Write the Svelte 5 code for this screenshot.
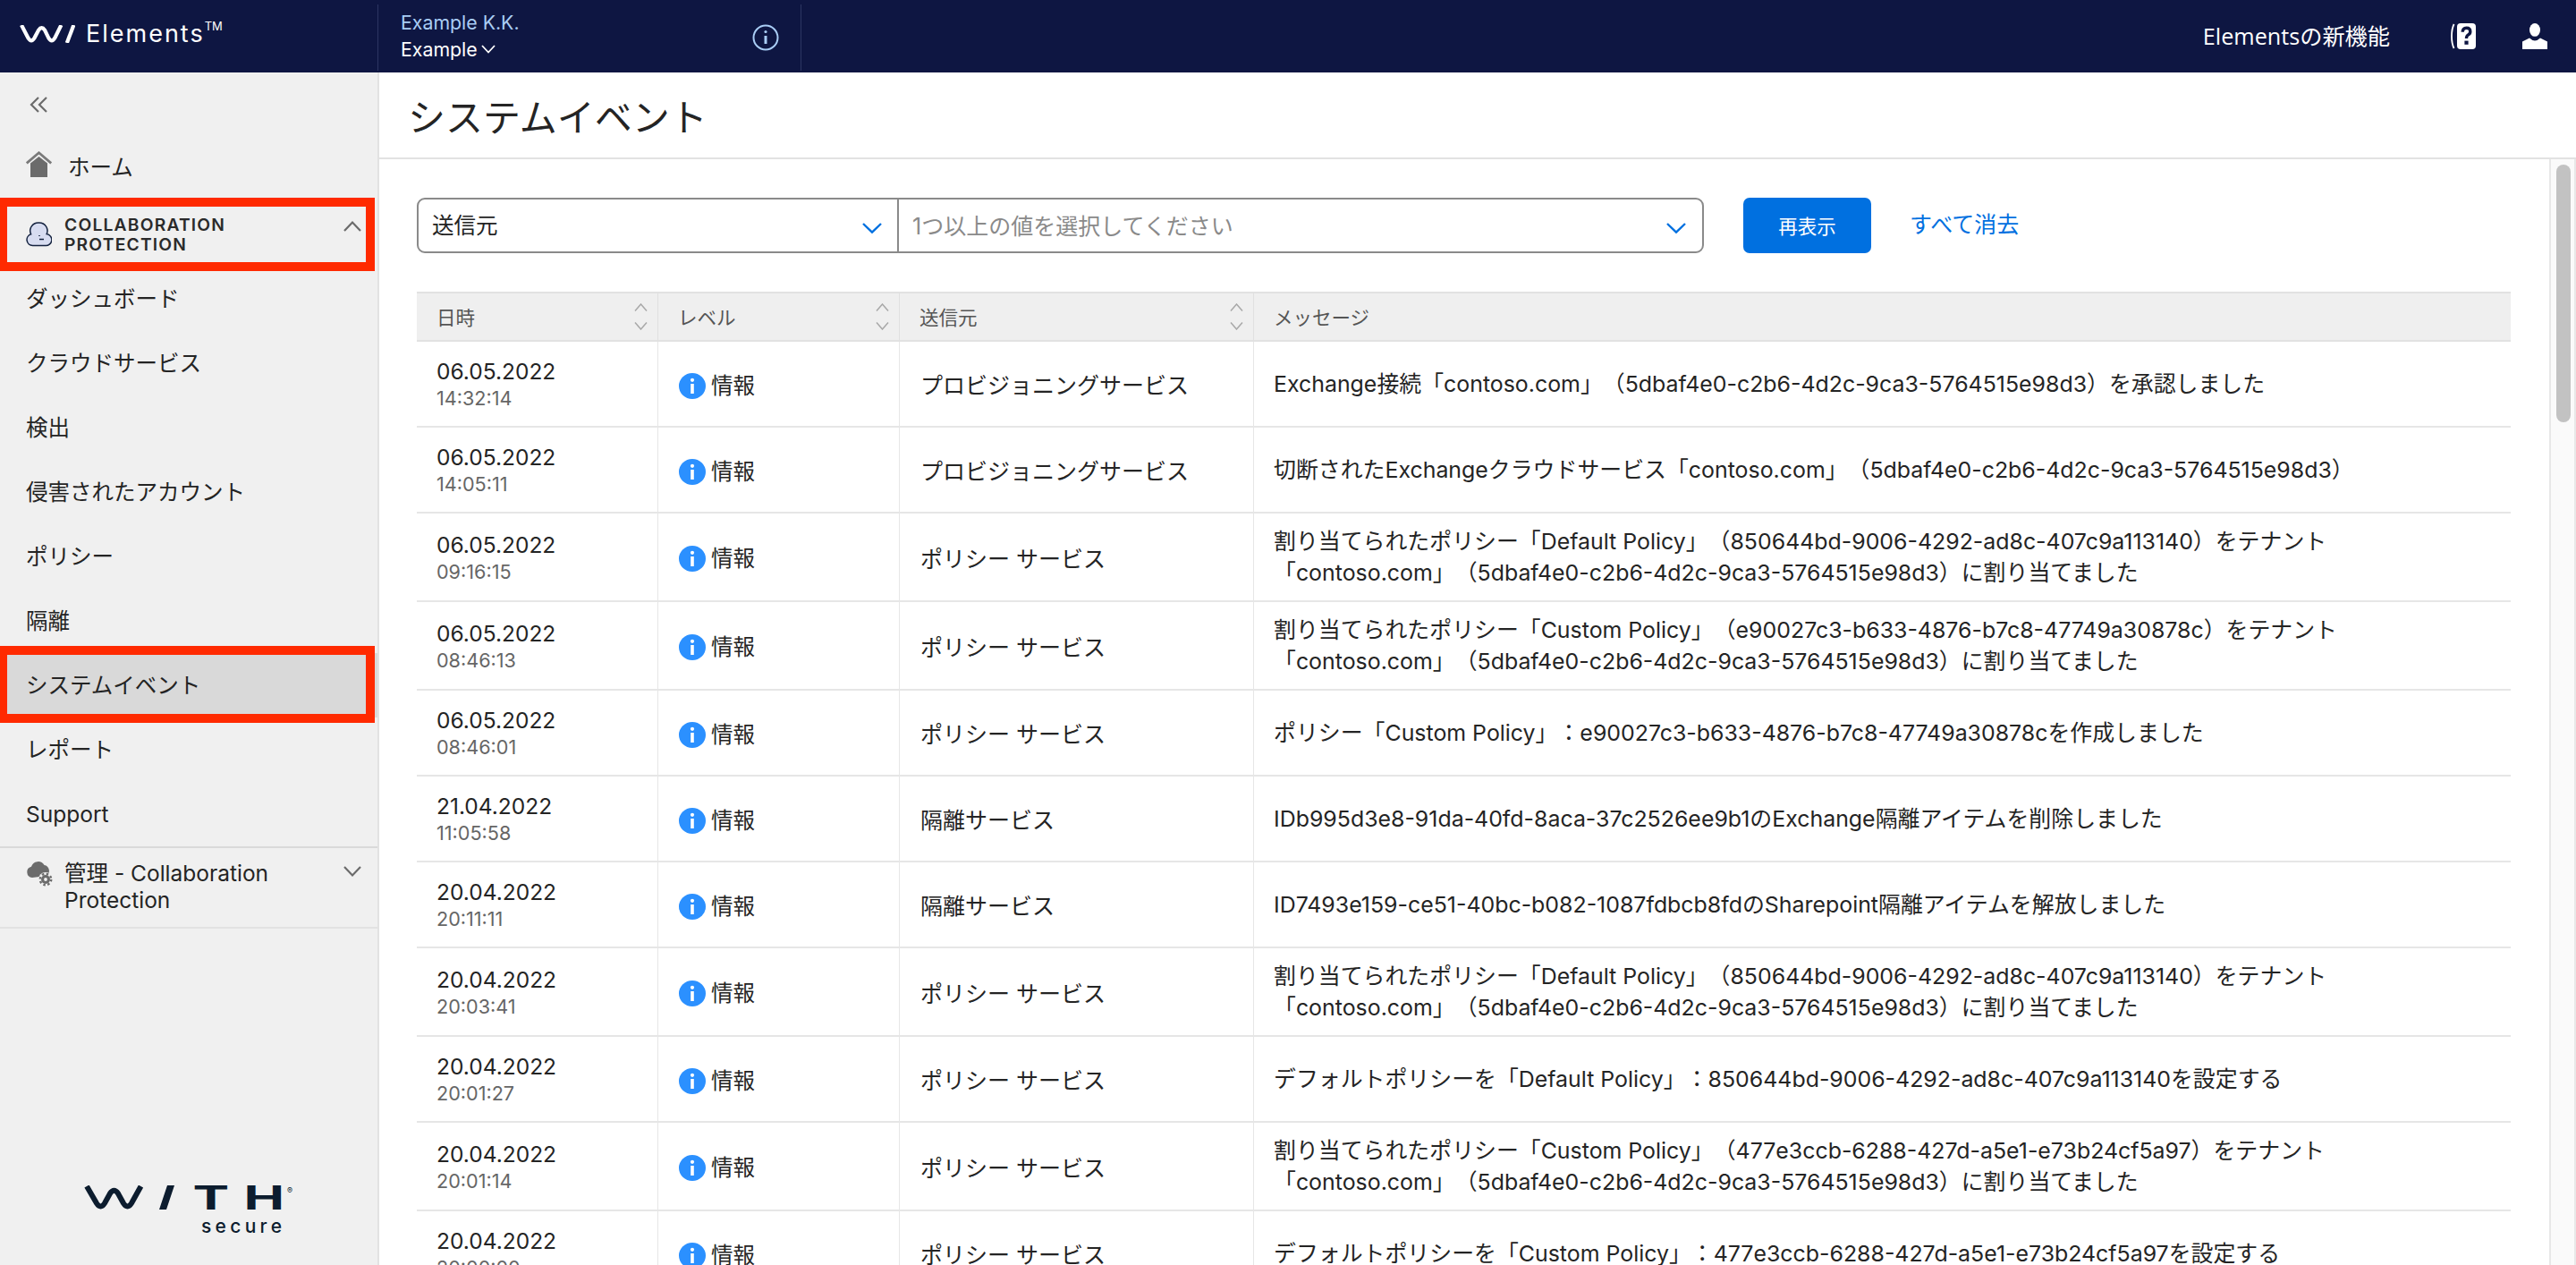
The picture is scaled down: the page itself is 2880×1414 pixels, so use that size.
<script lang="ts">
  type Row = { date: string; time: string; source: string; lines: string[] };

  const tenant = '「contoso.com」（5dbaf4e0-c2b6-4d2c-9ca3-5764515e98d3）に割り当てました';
  const prov = 'プロビジョニングサービス';
  const policy = 'ポリシー サービス';
  const quarantine = '隔離サービス';

  const rows: Row[] = [
    { date: '06.05.2022', time: '14:32:14', source: prov, lines: ['Exchange接続「contoso.com」（5dbaf4e0-c2b6-4d2c-9ca3-5764515e98d3）を承認しました'] },
    { date: '06.05.2022', time: '14:05:11', source: prov, lines: ['切断されたExchangeクラウドサービス「contoso.com」（5dbaf4e0-c2b6-4d2c-9ca3-5764515e98d3）'] },
    { date: '06.05.2022', time: '09:16:15', source: policy, lines: ['割り当てられたポリシー「Default Policy」（850644bd-9006-4292-ad8c-407c9a113140）をテナント', tenant] },
    { date: '06.05.2022', time: '08:46:13', source: policy, lines: ['割り当てられたポリシー「Custom Policy」（e90027c3-b633-4876-b7c8-47749a30878c）をテナント', tenant] },
    { date: '06.05.2022', time: '08:46:01', source: policy, lines: ['ポリシー「Custom Policy」：e90027c3-b633-4876-b7c8-47749a30878cを作成しました'] },
    { date: '21.04.2022', time: '11:05:58', source: quarantine, lines: ['IDb995d3e8-91da-40fd-8aca-37c2526ee9b1のExchange隔離アイテムを削除しました'] },
    { date: '20.04.2022', time: '20:11:11', source: quarantine, lines: ['ID7493e159-ce51-40bc-b082-1087fdbcb8fdのSharepoint隔離アイテムを解放しました'] },
    { date: '20.04.2022', time: '20:03:41', source: policy, lines: ['割り当てられたポリシー「Default Policy」（850644bd-9006-4292-ad8c-407c9a113140）をテナント', tenant] },
    { date: '20.04.2022', time: '20:01:27', source: policy, lines: ['デフォルトポリシーを「Default Policy」：850644bd-9006-4292-ad8c-407c9a113140を設定する'] },
    { date: '20.04.2022', time: '20:01:14', source: policy, lines: ['割り当てられたポリシー「Custom Policy」（477e3ccb-6288-427d-a5e1-e73b24cf5a97）をテナント', tenant] },
    { date: '20.04.2022', time: '20:00:00', source: policy, lines: ['デフォルトポリシーを「Custom Policy」：477e3ccb-6288-427d-a5e1-e73b24cf5a97を設定する'] },
  ];

  const navItems = ['ダッシュボード', 'クラウドサービス', '検出', '侵害されたアカウント', 'ポリシー', '隔離', 'システムイベント', 'レポート', 'Support'];
  const columns = ['日時', 'レベル', '送信元'];
</script>

<div class="app" lang="ja">
  <header class="topbar">
    <div class="brand">
      <svg class="mark" width="62" height="20" viewBox="0 0 62 20" fill="none" stroke="#fff" stroke-width="4.2">
        <path d="M2 0 L9.6 14.6 Q13 20 16.4 14.6 L21.2 5.6 Q24.6 0.6 28 5.6 L32.4 14.6 Q35.8 20 39.2 14.6 L46.4 0" />
        <path d="M60.4 0 L52.8 20" />
      </svg>
      <span class="brand-name">Elements<sup>TM</sup></span>
    </div>
    <div class="tenant">
      <div class="tenant-text">
        <span class="tenant-org">Example K.K.</span>
        <span class="tenant-sel">Example
          <svg width="16" height="10" viewBox="0 0 16 10" fill="none" stroke="#fff" stroke-width="1.8"><path d="M1 1 L8 8.5 L15 1" /></svg>
        </span>
      </div>
      <svg class="info-line" width="30" height="30" viewBox="0 0 30 30" fill="none" stroke="#a9cdf5" stroke-width="2">
        <circle cx="15" cy="15" r="13.5" />
        <path d="M15 13 V22" stroke-width="3" />
        <circle cx="15" cy="8.5" r="1.6" fill="#a9cdf5" stroke="none" />
      </svg>
    </div>
    <div class="top-right">
      <span class="whatsnew">Elementsの新機能</span>
      <svg class="help" width="28" height="29" viewBox="0 0 28 29">
        <path d="M3.6 1 Q1 6 1 14.5 Q1 23 3.6 28" fill="none" stroke="#fff" stroke-width="1.8" />
        <rect x="7" y="0" width="21" height="29" rx="4" fill="#fff" />
        <path d="M13.2 9.8 Q13.2 5.2 17.5 5.2 Q21.8 5.2 21.8 9.2 Q21.8 11.8 19.4 13 Q17.5 14 17.5 17" fill="none" stroke="#0e1642" stroke-width="3.4" />
        <rect x="15.4" y="19.6" width="4.2" height="4.2" fill="#0e1642" />
      </svg>
      <svg class="user" width="28" height="29" viewBox="0 0 28 29" fill="#fff">
        <ellipse cx="14" cy="7.4" rx="6" ry="7.4" />
        <path d="M0 29 V20.5 L8 16.6 Q14 22.5 20 16.6 L28 20.5 V29 Z" />
      </svg>
    </div>
  </header>

  <div class="body">
    <aside class="sidebar">
      <div class="collapse">
        <svg width="20" height="18" viewBox="0 0 20 18" fill="none" stroke="#6b6b6b" stroke-width="2.2"><path d="M10 1 L2 9 L10 17 M19 1 L11 9 L19 17" /></svg>
      </div>
      <div class="home">
        <svg width="29" height="29" viewBox="0 0 29 29" fill="#6b6b6b">
          <path d="M0.8 13.4 L14.5 1.8 L28.2 13.4" fill="none" stroke="#7a7a7a" stroke-width="2.8" />
          <path d="M5 13.5 L14.5 6 L24 13.5 V29 H5 Z" />
        </svg>
        <span>ホーム</span>
      </div>
      <div class="section">
        <svg width="29" height="28" viewBox="0 0 29 28">
          <path d="M7.5 26.5 A6.5 6.5 0 0 1 5.6 13.8 A9 9 0 0 1 14.5 1 A9 9 0 0 1 23.2 13.6 A6.5 6.5 0 0 1 21.5 26.5 Z" fill="#d7dcf0" stroke="#14223f" stroke-width="1.5" />
          <path d="M15 15 V16 M15 19.5 H20" stroke="#14223f" stroke-width="1.6" fill="none" />
        </svg>
        <span class="section-title">COLLABORATION<br />PROTECTION</span>
        <svg class="chev" width="20" height="12" viewBox="0 0 20 12" fill="none" stroke="#6b6b6b" stroke-width="2.2"><path d="M1 11 L10 1.6 L19 11" /></svg>
      </div>
      <nav>
        {#each navItems as item}
          <div class="nav-item" class:active={item === 'システムイベント'}>{item}</div>
        {/each}
      </nav>
      <div class="admin">
        <svg width="30" height="30" viewBox="0 0 30 30">
          <path d="M7 20 A6.2 6.2 0 0 1 6 7.8 A8 8 0 0 1 20.5 6 A6.6 6.6 0 0 1 23 18 L7 20 Z" fill="#6b6b6b" />
          <circle cx="22" cy="22" r="8" fill="#f0f0f0" />
          <circle cx="22" cy="22" r="5" fill="#6b6b6b" />
          <circle cx="22" cy="22" r="6.2" fill="none" stroke="#6b6b6b" stroke-width="2.4" stroke-dasharray="2.4 2.47" />
          <circle cx="22" cy="22" r="1.9" fill="#f0f0f0" />
        </svg>
        <span class="admin-title">管理 - Collaboration Protection</span>
        <svg class="chev" width="20" height="12" viewBox="0 0 20 12" fill="none" stroke="#6b6b6b" stroke-width="2.2"><path d="M1 1 L10 10.4 L19 1" /></svg>
      </div>
      <div class="logo">
        <svg width="240" height="64" viewBox="0 0 240 64" fill="#0c1c2e">
          <path d="M3 1 L14 20 Q18.5 27 23 20 L29 9 Q33.5 2.5 38 9 L44 20 Q48.5 27 53 20 L63.5 1" fill="none" stroke="#0c1c2e" stroke-width="6" />
          <path d="M93 0 H101 L92 27 H84 Z" />
          <text class="logo-cap" transform="translate(121.5 27) scale(1.65 1)">T</text>
          <text class="logo-cap" transform="translate(178.5 27) scale(1.65 1)">H</text>
          <text class="logo-reg" x="227" y="9">®</text>
          <text class="logo-sub" x="131" y="53" textLength="90">secure</text>
        </svg>
      </div>
      <span class="mark-box box-section"></span>
      <span class="mark-box box-active"></span>
    </aside>

    <main class="main">
      <div class="title-bar"><h1>システムイベント</h1></div>
      <div class="content">
        <div class="scroll">
          <div class="filters">
            <div class="filter-box">
              <div class="filter-field">
                <span>送信元</span>
                <svg width="22" height="12" viewBox="0 0 22 12" fill="none" stroke="#0070e0" stroke-width="2.4"><path d="M1 1 L11 10.6 L21 1" /></svg>
              </div>
              <div class="filter-values">
                <span>1つ以上の値を選択してください</span>
                <svg width="22" height="12" viewBox="0 0 22 12" fill="none" stroke="#0070e0" stroke-width="2.4"><path d="M1 1 L11 10.6 L21 1" /></svg>
              </div>
            </div>
            <button class="apply">再表示</button>
            <span class="clear">すべて消去</span>
          </div>

          <table>
            <colgroup>
              <col style="width: 269px" />
              <col style="width: 270px" />
              <col style="width: 396px" />
              <col />
            </colgroup>
            <thead>
              <tr>
                {#each columns as col}
                  <th>
                    <div class="th-inner">
                      <span>{col}</span>
                      <span class="sort">
                        <svg width="15" height="9" viewBox="0 0 15 9" fill="none" stroke="#a8a8a8" stroke-width="1.5"><path d="M1 8.5 L7.5 1 L14 8.5" /></svg>
                        <svg width="15" height="9" viewBox="0 0 15 9" fill="none" stroke="#a8a8a8" stroke-width="1.5"><path d="M1 0.5 L7.5 8 L14 0.5" /></svg>
                      </span>
                    </div>
                  </th>
                {/each}
                <th>メッセージ</th>
              </tr>
            </thead>
            <tbody>
              {#each rows as r}
                <tr>
                  <td class="when">
                    <div class="date">{r.date}</div>
                    <div class="time">{r.time}</div>
                  </td>
                  <td>
                    <div class="level">
                      <svg width="30" height="29" viewBox="0 0 30 29">
                        <ellipse cx="15" cy="14.5" rx="15" ry="14.5" fill="#2b90ff" />
                        <rect x="13.2" y="12" width="3.6" height="11" fill="#fff" />
                        <circle cx="15" cy="7.8" r="2.1" fill="#fff" />
                      </svg>
                      <span>情報</span>
                    </div>
                  </td>
                  <td class="source">{r.source}</td>
                  <td class="message">
                    {#each r.lines as line}
                      <div>{line}</div>
                    {/each}
                  </td>
                </tr>
              {/each}
            </tbody>
          </table>
        </div>
        <div class="scrollbar"><div class="thumb"></div></div>
      </div>
    </main>
  </div>
</div>

<style>
  :global(body) {
    margin: 0;
    background: #fff;
    overflow: hidden;
  }
  .app {
    height: 100vh;
    display: flex;
    flex-direction: column;
    font-family: Inter, "Noto Sans CJK JP", sans-serif;
    font-size: 24.5px;
    color: #242424;
    overflow: hidden;
    text-spacing-trim: space-all;
  }

  .topbar {
    flex: 0 0 81px;
    display: flex;
    background: #0e1642;
    color: #fff;
  }
  .brand {
    width: 422px;
    box-sizing: border-box;
    padding: 28px 0 0 22px;
    display: flex;
    align-items: flex-start;
    gap: 12px;
  }
  .brand-name {
    font-size: 27px;
    line-height: 20px;
    letter-spacing: 2px;
  }
  .brand-name sup {
    font-size: 13px;
    letter-spacing: 0;
    line-height: 0;
    vertical-align: 13px;
  }
  .tenant {
    width: 474px;
    box-sizing: border-box;
    margin: 5px 0 2px;
    padding: 0 24px 4px 25px;
    display: flex;
    align-items: center;
    justify-content: space-between;
    border-left: 1px solid #2c3562;
    border-right: 1px solid #2c3562;
  }
  .info-line { margin-top: 4px; }
  .tenant-text {
    display: flex;
    flex-direction: column;
    gap: 8px;
    font-size: 21.3px;
    line-height: 22px;
  }
  .tenant-org { color: #a9cdf5; }
  .tenant-sel {
    display: flex;
    align-items: center;
    gap: 4px;
  }
  .top-right {
    margin-left: auto;
    padding-right: 32px;
    display: flex;
    align-items: center;
    font-family: "Open Sans", "Noto Sans CJK JP", sans-serif;
  }
  .whatsnew {
    font-size: 25.2px;
    margin-top: -3px;
  }
  .help { margin-left: 68px; }
  .user { margin-left: 52px; }

  .body {
    flex: 1;
    min-height: 0;
    display: flex;
  }
  .sidebar {
    position: relative;
    width: 424px;
    flex: none;
    box-sizing: border-box;
    background: #f0f0f0;
    border-right: 2px solid #e2e2e2;
    display: flex;
    flex-direction: column;
  }
  .collapse {
    height: 71px;
    padding-left: 33px;
    display: flex;
    align-items: center;
  }
  .home {
    height: 72px;
    box-sizing: border-box;
    padding: 0 0 6px 29px;
    display: flex;
    align-items: center;
    gap: 18px;
  }
  .home svg { margin-top: -3px; }
  .section {
    height: 74px;
    box-sizing: border-box;
    padding: 2px 18px 0 29px;
    display: flex;
    align-items: center;
    gap: 14px;
  }
  .section-title {
    font-size: 19.25px;
    font-weight: 600;
    line-height: 22px;
    letter-spacing: 1.2px;
    color: #2a2a2a;
  }
  .section .chev { margin: -18px 0 0 auto; }
  .nav-item {
    height: 72px;
    line-height: 72px;
    padding-left: 29px;
    box-sizing: border-box;
  }
  .nav-item.active { background: #d9d9d9; }
  .admin {
    border-top: 2px solid #d9d9d9;
    border-bottom: 2px solid #e2e2e2;
    padding: 13px 18px 15px 29px;
    display: flex;
    align-items: flex-start;
    gap: 13px;
  }
  .admin-title {
    flex: 1;
    line-height: 30.2px;
    max-width: 260px;
  }
  .admin .chev { margin: 7px 0 0 auto; }
  .logo {
    margin-top: auto;
    padding: 0 0 25px 94px;
    line-height: 0;
  }
  .logo-cap {
    font-family: Inter, sans-serif;
    font-weight: 700;
    font-size: 37px;
  }
  .logo-reg {
    font-family: Inter, sans-serif;
    font-size: 9px;
  }
  .logo-sub {
    font-family: Inter, sans-serif;
    font-weight: 500;
    font-size: 21px;
  }
  .mark-box {
    position: absolute;
    left: 0;
    width: 419px;
    box-sizing: border-box;
    border: solid #ff2a00;
    border-width: 10px 10px 10px 8px;
    pointer-events: none;
  }
  .box-section { top: 140px; height: 82px; }
  .box-active { top: 641px; height: 86px; }

  .main {
    flex: 1;
    min-width: 0;
    display: flex;
    flex-direction: column;
  }
  .title-bar {
    flex: 0 0 97px;
    box-sizing: border-box;
    border-bottom: 2px solid #e2e2e2;
    padding-left: 32px;
    display: flex;
    align-items: center;
  }
  h1 {
    margin: 0;
    font-size: 42px;
    font-weight: 400;
    color: #242424;
  }
  .content {
    flex: 1;
    min-height: 0;
    display: flex;
  }
  .scroll {
    flex: 1;
    min-width: 0;
    box-sizing: border-box;
    padding: 43px 0 0 42px;
    overflow: hidden;
  }
  .filters {
    display: flex;
    align-items: center;
    width: 1800px;
  }
  .filter-box {
    width: 1439px;
    height: 62px;
    box-sizing: border-box;
    display: flex;
    border: 2px solid #8a8a8a;
    border-radius: 9px;
  }
  .filter-field,
  .filter-values {
    display: flex;
    align-items: center;
    justify-content: space-between;
  }
  .filter-field span,
  .filter-values span { margin-top: -3px; }
  .filter-field {
    width: 537px;
    box-sizing: border-box;
    padding: 0 17px 0 15px;
    border-right: 2px solid #8a8a8a;
  }
  .filter-values {
    flex: 1;
    padding: 0 18px 0 15px;
    color: #8a8a8a;
    font-size: 25px;
  }
  .filter-field svg,
  .filter-values svg { margin-top: 6px; }
  .apply {
    margin-left: 44px;
    width: 143px;
    height: 62px;
    border: none;
    border-radius: 7px;
    background: #0070e0;
    color: #fff;
    font: inherit;
    font-size: 21.5px;
    padding-bottom: 3px;
  }
  .clear {
    margin: -6px 0 0 43px;
    color: #0070e0;
    font-size: 25px;
  }
  table {
    margin-top: 43px;
    width: 2341px;
    table-layout: fixed;
    border-collapse: separate;
    border-spacing: 0;
  }
  th {
    height: 56px;
    box-sizing: border-box;
    background: #efefef;
    border-top: 2px solid #e2e2e2;
    border-bottom: 2px solid #e2e2e2;
    border-left: 1px solid #e0e0e0;
    padding: 0 11px 2px 22px;
    font-size: 21.5px;
    font-weight: 400;
    color: #555;
    text-align: left;
  }
  th:first-child, td:first-child { border-left: none; }
  .th-inner {
    display: flex;
    align-items: center;
    justify-content: space-between;
  }
  .sort {
    display: flex;
    flex-direction: column;
    gap: 12px;
    line-height: 0;
    margin-bottom: -2px;
  }
  td {
    height: 96px;
    box-sizing: border-box;
    border-bottom: 2px solid #e6e6e6;
    border-left: 1px solid #e6e6e6;
    padding: 0 20px 0 23px;
    vertical-align: middle;
  }
  .when { padding-left: 22px; }
  .date {
    font-size: 24.5px;
    line-height: 32px;
  }
  .time {
    font-size: 21.6px;
    line-height: 28px;
    color: #666;
  }
  .level {
    display: flex;
    align-items: center;
    gap: 6px;
  }
  .level svg { margin-top: 4px; }
  .source { font-size: 25px; }
  .message {
    padding: 13.5px 20px 13.5px 22px;
    font-size: 24.9px;
    line-height: 35px;
    white-space: nowrap;
  }
  .scrollbar {
    width: 30px;
    flex: none;
    box-sizing: border-box;
    background: #fafafa;
    border-left: 2px solid #e8e8e8;
    border-right: 2px solid #e8e8e8;
    padding: 6px 4px 0 6px;
  }
  .thumb {
    height: 288px;
    border-radius: 8px;
    background: #c2c2c2;
  }
</style>
